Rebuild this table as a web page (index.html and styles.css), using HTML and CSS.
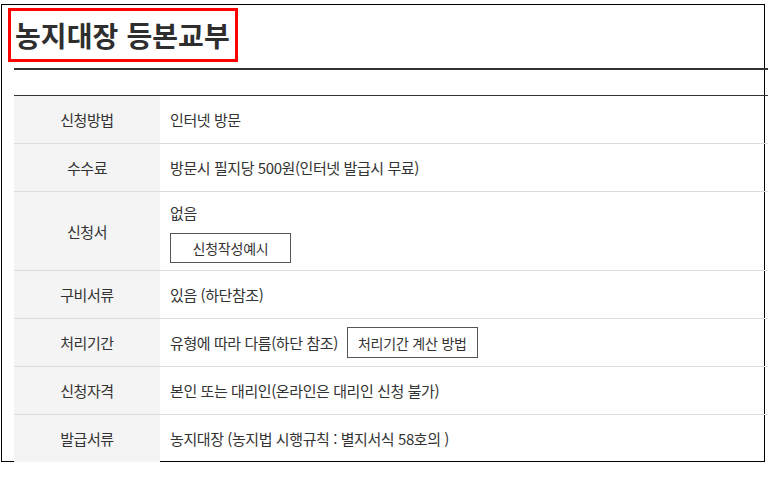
FILE: index.html
```html
<!DOCTYPE html>
<html lang="ko">
<head>
<meta charset="utf-8">
<title>농지대장 등본교부</title>
<link rel="stylesheet" href="styles.css">
</head>
<body>
<div class="page">
  <h1 class="title">농지대장 등본교부</h1>
  <div class="content">
    <div class="rule"></div>
    <table class="info">
      <tr><th>신청방법</th><td>인터넷 방문</td></tr>
      <tr><th>수수료</th><td>방문시 필지당 500원(인터넷 발급시 무료)</td></tr>
      <tr class="tall"><th>신청서</th><td><div class="line">없음</div><button class="btn">신청작성예시</button></td></tr>
      <tr><th>구비서류</th><td>있음 (하단참조)</td></tr>
      <tr><th>처리기간</th><td><span class="inline">유형에 따라 다름(하단 참조)</span><button class="btn btn-wide">처리기간 계산 방법</button></td></tr>
      <tr><th>신청자격</th><td>본인 또는 대리인(온라인은 대리인 신청 불가)</td></tr>
      <tr class="last"><th>발급서류</th><td>농지대장 (농지법 시행규칙 : 별지서식 58호의 )</td></tr>
    </table>
  </div>
</div>
</body>
</html>
```
FILE: styles.css
```css
html, body {
  margin: 0;
  padding: 0;
  overflow: hidden;
  background: #fff;
}
body {
  font-family: "Noto Sans CJK KR", "Noto Sans", sans-serif;
  color: #333;
}
.page {
  margin: 4px 0 0 1px;
  width: 756px;
  height: 453px;
  padding: 3px 0 0 6px;
  border: 1px solid #000;
}
.title {
  display: inline-block;
  margin: 0;
  height: 48px;
  line-height: 48px;
  padding: 0 5px 0 4px;
  border: 3px solid #ff0000;
  font-size: 28px;
  font-weight: bold;
  letter-spacing: 0.1px;
  color: #2e2e2e;
  vertical-align: top;
}
.content {
  margin: 6px 0 0 6px;
  width: 760px;
}
.rule {
  height: 0;
  border-top: 2px solid #333;
}
.info {
  margin-top: 25px;
  width: 760px;
  border-collapse: collapse;
  border-top: 1px solid #333;
  font-size: 15px;
  letter-spacing: -0.42px;
}
.info th, .info td {
  height: 47px;
  padding: 0;
  border-bottom: 1px solid #dcdcdc;
  vertical-align: middle;
  text-align: left;
}
.info th {
  width: 146px;
  background: #f4f4f4;
  font-weight: normal;
  text-align: center;
}
.info td {
  padding-left: 10px;
}
.info tr.tall td, .info tr.tall th {
  height: 78px;
}
.info tr.tall td {
  padding-top: 11px;
  padding-bottom: 7px;
  vertical-align: top;
  box-sizing: border-box;
}
.info tr.last th, .info tr.last td {
  border-bottom: 2px solid #333;
}
.line {
  height: 20px;
  line-height: 20px;
  margin-bottom: 10px;
}
.btn {
  display: inline-block;
  height: 30px;
  width: 121px;
  padding: 0;
  background: #fff;
  border: 1px solid #555;
  border-radius: 0;
  font-family: "Noto Sans CJK KR", "Noto Sans", sans-serif;
  font-size: 14px;
  letter-spacing: -0.2px;
  color: #333;
  vertical-align: middle;
}
.btn-wide {
  width: 131px;
  height: 31px;
}
.inline {
  margin-right: 9px;
  vertical-align: middle;
}
```
